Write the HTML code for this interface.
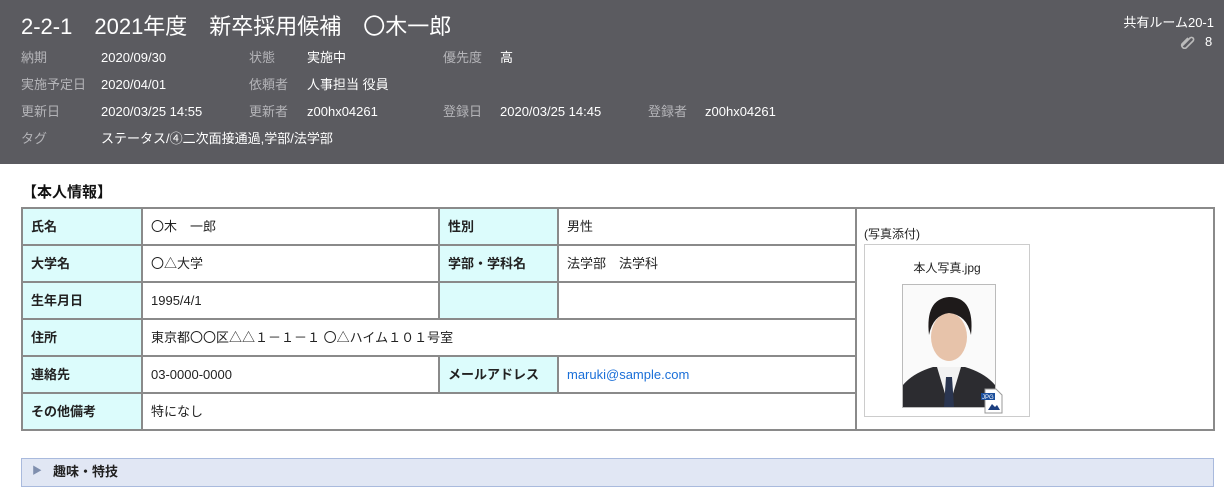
<!DOCTYPE html>
<html><head><meta charset="utf-8">
<style>
*{margin:0;padding:0;box-sizing:border-box}
body{width:1224px;height:492px;background:#fff;font-family:"Liberation Sans","Noto Sans CJK JP",sans-serif;position:relative;overflow:hidden;color:#222}
.hd{position:absolute;left:0;top:0;width:1224px;height:164px;background:#5b5b60;color:#fff}
.t{position:absolute;white-space:nowrap;line-height:18px}
.title{left:21px;top:14px;font-size:22px;line-height:26px;color:#fff}
.l{color:#b4b4b8;font-size:13px}
.v{color:#fff;font-size:13px}
h3{position:absolute;left:22px;top:183px;font-size:15px;font-weight:bold;color:#111;line-height:20px}
table{position:absolute;left:21px;top:207px;border-collapse:collapse;table-layout:fixed;width:1192px}
td{border:2px solid #8a8a8a;height:37px;font-size:13px;padding:0 8px;vertical-align:middle;line-height:18px}
td.k{background:#dcfcfc;font-weight:bold}
a{color:#1a6fd8}
.bar{position:absolute;left:21px;top:458px;width:1193px;height:29px;background:#e1e7f4;border:1px solid #a9badd;font-size:13px;font-weight:bold}
</style></head><body>
<div class="hd">
<div class="t title">2-2-1　2021年度　新卒採用候補　〇木一郎</div>
<div class="t l" style="left:21px;top:49px">納期</div><div class="t v" style="left:101px;top:49px">2020/09/30</div>
<div class="t l" style="left:249px;top:49px">状態</div><div class="t v" style="left:307px;top:49px">実施中</div>
<div class="t l" style="left:443px;top:49px">優先度</div><div class="t v" style="left:500px;top:49px">高</div>
<div class="t l" style="left:21px;top:76px">実施予定日</div><div class="t v" style="left:101px;top:76px">2020/04/01</div>
<div class="t l" style="left:249px;top:76px">依頼者</div><div class="t v" style="left:307px;top:76px">人事担当 役員</div>
<div class="t l" style="left:21px;top:103px">更新日</div><div class="t v" style="left:101px;top:103px">2020/03/25 14:55</div>
<div class="t l" style="left:249px;top:103px">更新者</div><div class="t v" style="left:307px;top:103px">z00hx04261</div>
<div class="t l" style="left:443px;top:103px">登録日</div><div class="t v" style="left:500px;top:103px">2020/03/25 14:45</div>
<div class="t l" style="left:648px;top:103px">登録者</div><div class="t v" style="left:705px;top:103px">z00hx04261</div>
<div class="t l" style="left:21px;top:130px">タグ</div><div class="t v" style="left:101px;top:130px">ステータス/④二次面接通過,学部/法学部</div>
<div class="t v" style="right:10px;top:14px">共有ルーム20-1</div>
<svg style="position:absolute;left:1179px;top:35px" width="16" height="14" viewBox="0 0 16 14"><path d="M3 11 L11 3 a2 2 0 0 1 3 3 L7 13 a3 3 0 0 1 -4 -4 L9 3" fill="none" stroke="#bbb" stroke-width="1.6"/></svg>
<div class="t v" style="left:1205px;top:33px">8</div>
</div>
<h3>【本人情報】</h3>
<table>
<colgroup><col style="width:120px"><col style="width:297px"><col style="width:119px"><col style="width:298px"><col style="width:358px"></colgroup>
<tr><td class="k">氏名</td><td>〇木　一郎</td><td class="k">性別</td><td>男性</td>
<td rowspan="6" style="vertical-align:top;padding:16px 0 0 7px;position:relative">
<div style="font-size:12px">(写真添付)</div>
<div style="width:166px;height:173px;border:1px solid #ccc;margin-top:1px;position:relative">
<div style="position:absolute;left:0;width:164px;top:14px;text-align:center;font-size:12px">本人写真.jpg</div>
<div style="position:absolute;left:37px;top:39px;width:94px;height:124px;border:1px solid #bbb;background:#fafafa;overflow:hidden">
<svg width="92" height="122" viewBox="0 0 92 122">
<path d="M0 122 L0 100 Q10 88 30 82 L62 82 Q82 88 92 100 L92 122Z" fill="#2c2c30"/>
<path d="M34 82 L46 122 L58 82Z" fill="#f2f2f2"/>
<path d="M43 92 L49 92 L51 122 L41 122Z" fill="#2a3550"/>
<ellipse cx="46" cy="52" rx="18" ry="24" fill="#e7c3aa"/>
<path d="M26 50 Q22 14 46 12 Q72 12 68 50 Q64 30 46 28 Q30 30 26 50Z" fill="#1e1a1a"/>
</svg></div>
<svg style="position:absolute;left:116px;top:143px" width="22" height="26" viewBox="0 0 22 26"><path d="M4 1 L15 1 L21 7 L21 25 L4 25Z" fill="#fff" stroke="#999"/><rect x="0" y="5" width="14" height="7" fill="#1c4f9c"/><text x="1" y="11" font-size="6" fill="#fff" font-family="Liberation Sans">JPG</text><path d="M7 22 L11 16 L14 19 L16 17 L19 22Z" fill="#1c3f80"/></svg>
</div></td></tr>
<tr><td class="k">大学名</td><td>〇△大学</td><td class="k">学部・学科名</td><td>法学部　法学科</td></tr>
<tr><td class="k">生年月日</td><td>1995/4/1</td><td class="k"></td><td></td></tr>
<tr><td class="k">住所</td><td colspan="3">東京都〇〇区△△１－１－１ 〇△ハイム１０１号室</td></tr>
<tr><td class="k">連絡先</td><td>03-0000-0000</td><td class="k">メールアドレス</td><td><a>maruki@sample.com</a></td></tr>
<tr><td class="k">その他備考</td><td colspan="3">特になし</td></tr>
</table>
<div class="bar"><span style="position:absolute;left:10px;top:6px;color:#7f8fae;font-size:10px;line-height:14px">▶</span><span style="position:absolute;left:31px;top:4px;line-height:18px">趣味・特技</span></div>
</body></html>
